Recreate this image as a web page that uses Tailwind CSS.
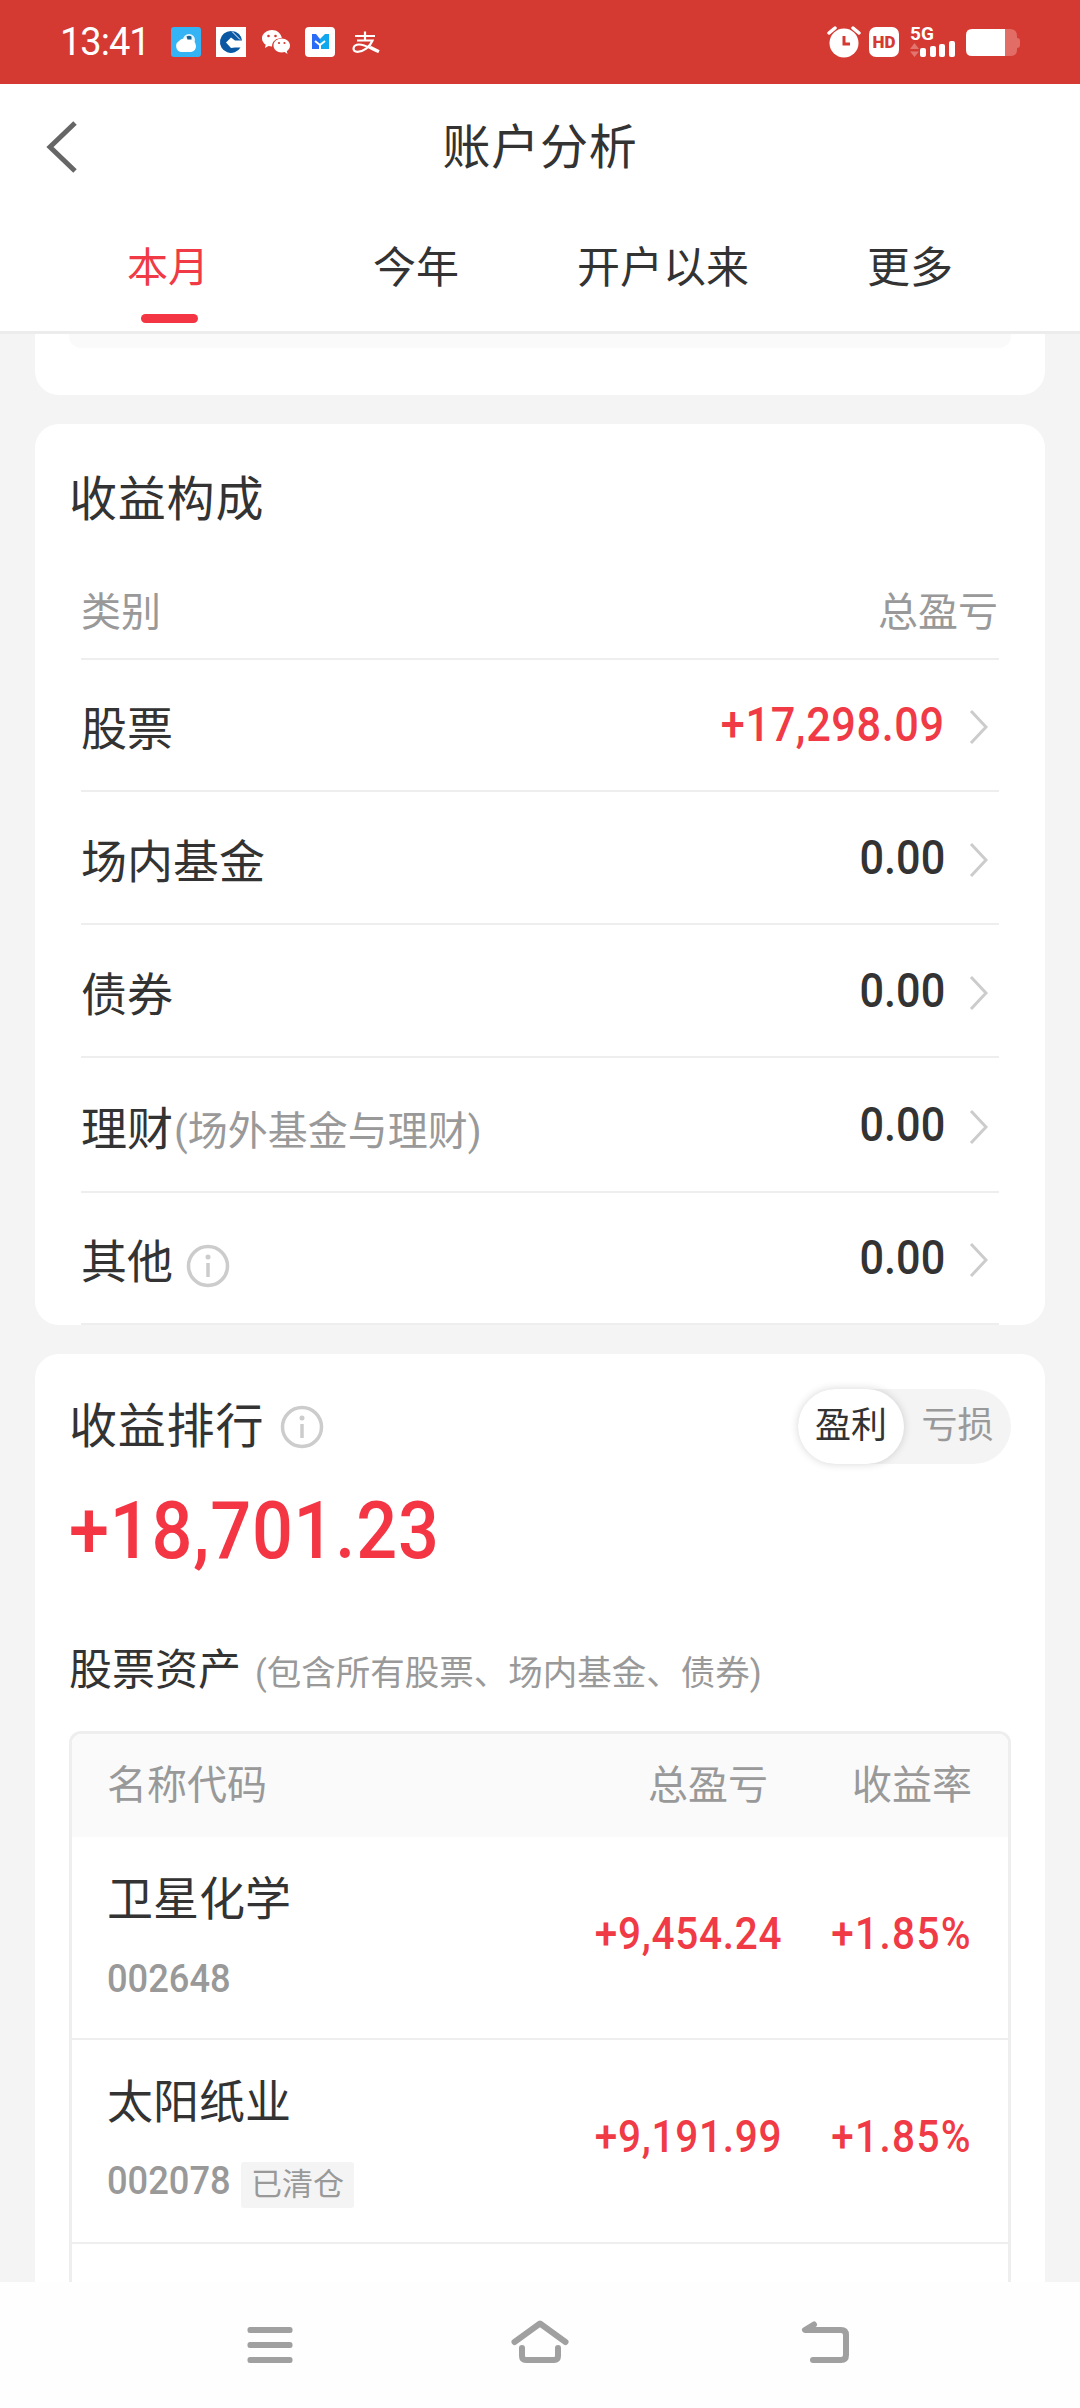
<!DOCTYPE html>
<html lang="zh-CN">
<head>
    <meta charset="UTF-8">
    <title>账户分析</title>
    <script src="https://cdn.jsdelivr.net/npm/@tailwindcss/browser@4"></script>
</head>
<body class="w-[1080px] h-[2408px] overflow-hidden flex flex-col bg-[#f4f4f4] text-[#333] font-['Roboto','Noto_Sans_CJK_SC',sans-serif]">
    <!-- Status bar -->
    <div class="h-[84px] shrink-0 bg-[#d43a32] flex items-center justify-between pl-[60px] pr-[60px] text-white">
        <div class="flex items-center">
            <span class="w-[111px] text-[38px] tracking-[-1px] leading-none whitespace-nowrap font-['Roboto']">13:41</span>
            <svg class="w-[30px] h-[30px]" viewBox="0 0 30 30">
                <rect width="30" height="30" rx="3" fill="#35b4f5"/>
                <circle cx="18" cy="13" r="6" fill="#e8f6ff"/>
                <path d="M10 25a6 6 0 0 1-2-11 7 7 0 0 1 10-1 6 6 0 0 1 7 6 6 6 0 0 1-5 6z" fill="#fff"/>
                <path d="M15.500 9.500q2.500-1.500 5 0v3h-4z" fill="#15618f"/>
            </svg>
            <svg class="w-[30px] h-[30px] ml-[15px]" viewBox="0 0 30 30">
                <rect width="30" height="30" fill="#fff"/>
                <path fill-rule="evenodd" d="M15 4a11 11 0 1 0 9.500 16.500H19l-4 .5-5-5.500 5-5 4 3h7A11 11 0 0 0 23 7 11 11 0 0 0 15 4z" fill="#0a57a4"/>
                <path d="M16 4.500l8 8" stroke="#fff" stroke-width="1"/>
            </svg>
            <svg class="w-[30px] h-[30px] ml-[15px]" viewBox="0 0 30 30">
                <path d="M11 3C5.500 3 1 6.700 1 11.300c0 2.600 1.400 4.900 3.700 6.400L4 21l3.500-1.900c1.200.3 2.300.4 3.500.4 0-5 4-8.500 9.800-8.500C20 6.500 16 3 11 3z" fill="#fff"/>
                <path d="M29 18.500c0-3.900-3.800-7-8.300-7s-8.200 3.100-8.200 7 3.700 7 8.200 7c1 0 2-.1 2.900-.4L26.500 27l-.7-2.800c2-1.300 3.200-3.400 3.200-5.700z" fill="#fff"/>
                <g fill="#d43a32"><circle cx="7.500" cy="9" r="1.300"/><circle cx="14.500" cy="9" r="1.300"/><circle cx="18" cy="16" r="1.100"/><circle cx="23.500" cy="16" r="1.100"/></g>
            </svg>
            <svg class="w-[30px] h-[30px] ml-[14px]" viewBox="0 0 30 30">
                <rect width="30" height="30" rx="4" fill="#fff"/>
                <path d="M7 7h4l4 5v10H7z" fill="#2a6cf5"/>
                <path d="M15 12l5-5h4v15h-9z" fill="#0fa8ee"/>
                <path d="M10 14l5 4 5-4M15 18v5" stroke="#fff" stroke-width="2" fill="none"/>
            </svg>
            <svg class="w-[30px] h-[30px] ml-[16px]" viewBox="0 0 30 30" fill="none" stroke="#fff" stroke-width="2.200">
                <path d="M4 9h20M14 4.500v9M6 13.500h15.500C19 20 12 24.800 6.500 24.800c-6 0-5-7.300 1.500-7.300 6.500 0 12 4.500 19.500 7.500"/>
                <path d="M19 20l9 4.500" stroke-width="3"/>
            </svg>
        </div>
        <div class="flex items-center">
            <svg class="w-[34px] h-[32px]" viewBox="0 0 34 32">
                <circle cx="17" cy="17" r="14.500" fill="#fff"/>
                <path d="M2 7l6-5M26 2l6 5" stroke="#fff" stroke-width="3.500" stroke-linecap="round"/>
                <path d="M17 10v8h6" stroke="#d43a32" stroke-width="3" fill="none"/>
            </svg>
            <div class="w-[30px] h-[30px] ml-[8px] rounded-[7px] bg-white text-[#d43a32] flex items-center justify-center text-[17px] font-black leading-none">HD</div>
            <div class="w-[46px] h-[32px] ml-[11px] flex flex-col justify-between">
                <span class="h-[14px] text-[19px] leading-[16px] font-bold whitespace-nowrap">5G</span>
                <svg class="w-[46px] h-[17px] -mt-[1px]" viewBox="0 0 46 17">
                    <path d="M0 8l4.500-6L9 8zM0 10.500L4.500 16 9 10.500z" fill="#e0766f"/>
                    <g fill="#fff"><rect x="10" y="7" width="6" height="9" rx="2"/><rect x="20" y="5" width="6" height="11" rx="2"/><rect x="29" y="3" width="6" height="13" rx="2"/><rect x="39" y="0" width="6" height="16" rx="2"/></g>
                </svg>
            </div>
            <svg class="w-[54px] h-[28px] ml-[10px] mt-[2px]" viewBox="0 0 54 28">
                <path d="M39 0h5q7 0 7 7v2q3 0 3 3v4q0 3-3 3v2q0 6-7 6h-5z" fill="#e26c66"/>
                <path d="M6 0h33v27H6q-6 0-6-6V6q0-6 6-6z" fill="#fff"/>
            </svg>
        </div>
    </div>

    <!-- Title bar and tabs -->
    <div class="h-[250px] shrink-0 bg-white border-b-3 border-[#ececec] flex flex-col">
        <div class="h-[126px] grid grid-cols-[120px_1fr_120px] items-center">
            <svg class="w-[32px] h-[54px] ml-[46px]" viewBox="0 0 32 54" fill="none" stroke="#666" stroke-width="5">
                <path d="M29 3L4 27l25 24"/>
            </svg>
            <h1 class="pt-[2px] text-center text-[48px] leading-[60px] tracking-[0.7px]">账户分析</h1>
        </div>
        <div class="flex-1 flex text-[43px] leading-[60px]">
            <div class="w-[338px] flex flex-col items-center pt-[28px] text-[#f03a46]">
                <span class="text-[41px] -ml-[2px]">本月</span>
                <div class="w-[57px] h-[9px] mt-[16px] rounded-full bg-[#f43644]"></div>
            </div>
            <div class="w-[156px] pt-[28px] text-center">今年</div>
            <div class="w-[338px] pt-[28px] text-center">开户以来</div>
            <div class="w-[156px] pt-[28px] text-center">更多</div>
        </div>
    </div>

    <div class="flex-1 overflow-hidden px-[35px]">
        <!-- End of the previous card -->
        <div class="h-[61px] bg-white rounded-b-[24px] px-[34px]">
            <div class="h-[14px] bg-[#fafafa] rounded-b-[12px]"></div>
        </div>

        <!-- Profit composition -->
        <div class="mt-[29px] h-[901px] bg-white rounded-[24px] px-[46px]">
            <h2 class="h-[138px] pt-[45px] -ml-[12px] text-[48px] leading-[62px] tracking-[0.8px]">收益构成</h2>
            <div class="h-[98px] pt-[21px] flex justify-between text-[40px] leading-[60px] text-[#999] border-b-2 border-[#eee]">
                <span>类别</span><span class="mr-[1px]">总盈亏</span>
            </div>
            <div class="h-[132px] flex items-center justify-between border-b-2 border-[#eee]">
                <span class="text-[46px] mt-[9px]">股票</span>
                <div class="flex items-center">
                    <span class="text-[48px] font-medium text-[#f03a46] origin-right scale-x-90 tracking-[0.7px]">+17,298.09</span>
                    <svg class="w-[19px] h-[34px] ml-[24px] mr-[11px] mt-[4px]" viewBox="0 0 19 34" fill="none" stroke="#ccc" stroke-width="3"><path d="M2 1l15 16L2 33"/></svg>
                </div>
            </div>
            <div class="h-[133px] flex items-center justify-between border-b-2 border-[#eee]">
                <span class="text-[46px] mt-[9px]">场内基金</span>
                <div class="flex items-center">
                    <span class="text-[48px] font-medium origin-right scale-x-90">0.00</span>
                    <svg class="w-[19px] h-[34px] ml-[24px] mr-[11px] mt-[4px]" viewBox="0 0 19 34" fill="none" stroke="#ccc" stroke-width="3"><path d="M2 1l15 16L2 33"/></svg>
                </div>
            </div>
            <div class="h-[133px] flex items-center justify-between border-b-2 border-[#eee]">
                <span class="text-[46px] mt-[9px]">债券</span>
                <div class="flex items-center">
                    <span class="text-[48px] font-medium origin-right scale-x-90">0.00</span>
                    <svg class="w-[19px] h-[34px] ml-[24px] mr-[11px] mt-[4px]" viewBox="0 0 19 34" fill="none" stroke="#ccc" stroke-width="3"><path d="M2 1l15 16L2 33"/></svg>
                </div>
            </div>
            <div class="h-[135px] flex items-center justify-between border-b-2 border-[#eee]">
                <span class="text-[46px] mt-[9px]">理财<span class="ml-[1px] text-[40px] text-[#999]">(场外基金与理财)</span></span>
                <div class="flex items-center">
                    <span class="text-[48px] font-medium origin-right scale-x-90">0.00</span>
                    <svg class="w-[19px] h-[34px] ml-[24px] mr-[11px] mt-[4px]" viewBox="0 0 19 34" fill="none" stroke="#ccc" stroke-width="3"><path d="M2 1l15 16L2 33"/></svg>
                </div>
            </div>
            <div class="h-[132px] flex items-center justify-between border-b-2 border-[#eee]">
                <div class="flex items-center">
                    <span class="text-[46px] mt-[9px]">其他</span>
                    <svg class="w-[44px] h-[44px] ml-[13px] mt-[16px]" viewBox="0 0 44 44" fill="none" stroke="#ccc" stroke-width="3.500"><circle cx="22" cy="22" r="19.500"/><path d="M22 19v14"/><circle cx="22" cy="13" r="2.500" fill="#ccc" stroke="none"/></svg>
                </div>
                <div class="flex items-center">
                    <span class="text-[48px] font-medium origin-right scale-x-90">0.00</span>
                    <svg class="w-[19px] h-[34px] ml-[24px] mr-[11px] mt-[4px]" viewBox="0 0 19 34" fill="none" stroke="#ccc" stroke-width="3"><path d="M2 1l15 16L2 33"/></svg>
                </div>
            </div>
        </div>

        <!-- Profit ranking -->
        <div class="mt-[29px] h-[1000px] bg-white rounded-t-[24px] px-[34px]">
            <div class="pt-[35px] flex items-center justify-between">
                <div class="flex items-center">
                    <h2 class="pt-[1px] text-[48px] leading-[62px] tracking-[0.8px]">收益排行</h2>
                    <svg class="w-[44px] h-[44px] ml-[16px]" viewBox="0 0 44 44" fill="none" stroke="#ccc" stroke-width="3.500"><circle cx="22" cy="22" r="19.500"/><path d="M22 19v14"/><circle cx="22" cy="13" r="2.500" fill="#ccc" stroke="none"/></svg>
                </div>
                <div class="w-[213px] h-[75px] rounded-full bg-[#f4f4f4] flex text-[36px] leading-[74px] text-center">
                    <span class="w-[106px] h-[75px] rounded-full bg-white shadow-[0_0_8px_rgba(0,0,0,0.16)]">盈利</span>
                    <span class="w-[107px] text-[#999]">亏损</span>
                </div>
            </div>
            <div class="h-[116px] pt-[20px] text-[80px] leading-[94px] font-medium text-[#f43644] tracking-[0.9px] origin-left scale-x-90">+18,701.23</div>
            <div class="h-[151px] pt-[60px] flex items-baseline">
                <span class="text-[43px] leading-[60px]">股票资产</span>
                <span class="ml-[14px] text-[34.5px] text-[#999] whitespace-nowrap">(包含所有股票、场内基金、债券)</span>
            </div>

            <!-- Stock table -->
            <div class="h-[700px] border-3 border-[#eee] rounded-[12px] overflow-hidden">
                <div class="h-[103px] bg-[#fafafa] pl-[35px] pr-[36px] flex items-center text-[40px] text-[#999]">
                    <span class="flex-1">名称代码</span>
                    <span class="w-[200px] text-right">总盈亏</span>
                    <span class="w-[204px] text-right">收益率</span>
                </div>
                <div class="h-[203px] pl-[35px] pr-[36px] flex items-center border-b-2 border-[#eee]">
                    <div class="flex-1 self-start pt-[29px]">
                        <div class="text-[46px] leading-[66px]">卫星化学</div>
                        <div class="mt-[21px] text-[39px] leading-[52px] font-medium text-[#999] origin-left scale-x-[0.93]">002648</div>
                    </div>
                    <span class="text-[45px] font-medium text-[#f03a46] origin-right scale-x-90 tracking-[0.8px] -mt-[7px]">+9,454.24</span>
                    <span class="w-[190px] text-right text-[45px] font-medium text-[#f03a46] origin-right scale-x-90 tracking-[1.5px] -mt-[7px]">+1.85%</span>
                </div>
                <div class="h-[204px] pl-[35px] pr-[36px] flex items-center border-b-2 border-[#eee]">
                    <div class="flex-1 self-start pt-[29px]">
                        <div class="text-[46px] leading-[66px]">太阳纸业</div>
                        <div class="mt-[20px] flex">
                            <span class="w-[134px] text-[39px] leading-[52px] font-medium text-[#999] origin-left scale-x-[0.93]">002078</span>
                            <span class="w-[113px] h-[46px] mt-[7px] rounded-[3px] bg-[#f4f4f4] text-center text-[31px] leading-[45px] text-[#999]">已清仓</span>
                        </div>
                    </div>
                    <span class="text-[45px] font-medium text-[#f03a46] origin-right scale-x-90 tracking-[0.8px] -mt-[9px]">+9,191.99</span>
                    <span class="w-[190px] text-right text-[45px] font-medium text-[#f03a46] origin-right scale-x-90 tracking-[1.5px] -mt-[9px]">+1.85%</span>
                </div>
            </div>
        </div>
    </div>

    <!-- System navigation -->
    <div class="h-[126px] shrink-0 bg-[#fefefe] flex items-center pl-[247px]">
        <svg class="w-[46px] h-[38px] shrink-0" viewBox="0 0 46 38" fill="#a0a0a0"><rect x="0.500" y="1" width="45" height="6" rx="2.500"/><rect x="0.500" y="16" width="45" height="6" rx="2.500"/><rect x="0.500" y="31" width="45" height="6" rx="2.500"/></svg>
        <svg class="w-[58px] h-[44px] ml-[218px] -mt-[6px] shrink-0" viewBox="0 0 58 44" fill="none" stroke="#a0a0a0" stroke-width="6" stroke-linecap="round" stroke-linejoin="round"><path d="M3.500 22L29 3.500 54.500 22M11 28v8q0 4 4 4h28q4 0 4-4v-8"/></svg>
        <svg class="w-[50px] h-[44px] ml-[232px] -mt-[6px] shrink-0" viewBox="0 0 50 44" fill="none" stroke="#a0a0a0" stroke-width="6" stroke-linecap="round" stroke-linejoin="round"><path d="M13 4.500L4 10h36q5 0 5 5v20q0 5-5 5H12"/></svg>
    </div>
</body>
</html>
